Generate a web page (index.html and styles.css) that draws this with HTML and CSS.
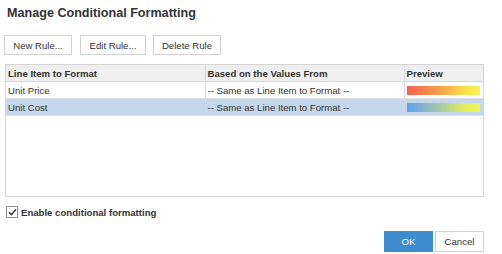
FILE: index.html
```html
<!DOCTYPE html>
<html lang="en">
<head>
  <meta charset="UTF-8" />
  <title>Manage Conditional Formatting</title>
  <link rel="stylesheet" href="styles.css">
</head>
<body>
  <div class="dialog">
    <h1 class="title">Manage Conditional Formatting</h1>

    <div class="toolbar">
      <button class="btn">New Rule...</button>
      <button class="btn">Edit Rule...</button>
      <button class="btn">Delete Rule</button>
    </div>

    <div class="grid-box">
      <table class="rules">
        <colgroup>
          <col class="c1"><col class="c2"><col class="c3">
        </colgroup>
        <tr><th>Line Item to Format</th><th>Based on the Values From</th><th>Preview</th></tr>
        <tr>
          <td>Unit Price</td>
          <td>-- Same as Line Item to Format --</td>
          <td><div class="swatch warm"></div></td>
        </tr>
        <tr class="selected">
          <td>Unit Cost</td>
          <td>-- Same as Line Item to Format --</td>
          <td><div class="swatch cool"></div></td>
        </tr>
      </table>
    </div>

    <label class="enable">
      <span class="check">
        <svg width="9" height="8" viewBox="0 0 9 8"><path d="M1 4.2 L3.4 6.6 L8 1.2" fill="none" stroke="#333" stroke-width="1.4"/></svg>
      </span>
      Enable conditional formatting
    </label>

    <div class="footer">
      <button class="btn ok">OK</button>
      <button class="btn">Cancel</button>
    </div>
  </div>
</body>
</html>
```

FILE: styles.css
```css
body {
  margin: 0;
  background: #fff;
  font-family: "Liberation Sans", Arial, sans-serif;
  color: #333;
}
.dialog {
  width: 502px;
  height: 254px;
}
.title {
  margin: 0;
  padding: 4px 7px 0;
  font-size: 12.6px;
  line-height: 18px;
  font-weight: bold;
  color: #333;
}
.toolbar {
  display: flex;
  gap: 7px;
  margin-top: 13px;
  padding-left: 4px;
}
.btn {
  font-family: inherit;
  font-size: 9.6px;
  color: #333;
  background: #fff;
  border: 1px solid #d2d2d2;
  height: 20px;
  padding: 0;
  cursor: pointer;
}
.toolbar .btn { width: 68px; }
.toolbar .btn:nth-child(2) { width: 66px; margin-left: 1px; }
.grid-box {
  margin: 9px 0 0 5px;
  width: 477px;
  height: 131px;
  border: 1px solid #d4d4d4;
}
.rules {
  width: 100%;
  border-collapse: collapse;
  table-layout: fixed;
  font-size: 9.6px;
}
.c1 { width: 199px; }
.c2 { width: 199px; }
.rules th, .rules td {
  height: 16px;
  padding: 0 3px 0 2px;
  text-align: left;
  border-bottom: 1px solid #e2e2e2;
  border-left: 1px solid #d8d8d8;
  white-space: nowrap;
}
.rules th:first-child, .rules td:first-child { border-left: none; }
.rules th {
  background: #efefef;
  font-weight: bold;
  border-bottom-color: #d8d8d8;
}
.rules .selected td { background: #c4d8ed; }
.swatch {
  width: 73px;
  height: 9px;
}
.warm { background: linear-gradient(to right, #f5604a, #f9a34b 45%, #f9e84c 85%, #f8f35a); }
.cool { background: linear-gradient(to right, #5f9ff2, #a8c9a0 45%, #e3ef5c 80%, #f6f356); }
.enable {
  display: flex;
  align-items: center;
  gap: 3px;
  margin: 9px 0 0 6px;
  font-size: 9.6px;
  font-weight: bold;
  color: #333;
}
.check {
  width: 10px;
  height: 10px;
  border: 1px solid #888;
  border-radius: 1px;
  display: flex;
  align-items: center;
  justify-content: center;
}
.footer {
  display: flex;
  justify-content: flex-end;
  gap: 2px;
  margin-top: 13px;
  padding-right: 18px;
}
.footer .btn {
  width: 49px;
  height: 21px;
  font-size: 9.6px;
}
.footer .ok {
  background: #3f8bd0;
  border-color: #3f8bd0;
  color: #fff;
}
```
